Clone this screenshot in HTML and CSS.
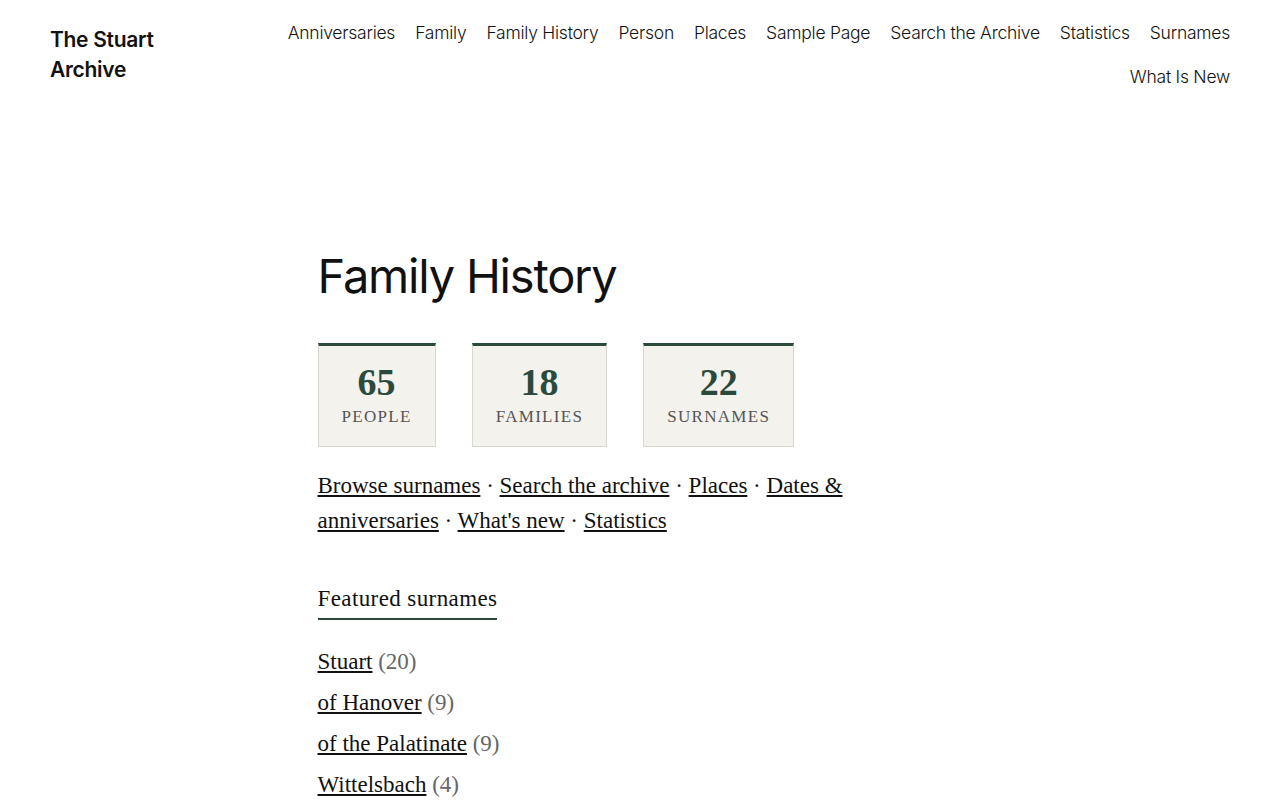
FILE: index.html
```html
<!DOCTYPE html>
<html lang="en">
  <head>
    <meta charset="UTF-8" />
    <meta name="viewport" content="width=device-width, initial-scale=1.0" />
    <title>Family History – The Stuart Archive</title>
    <link rel="stylesheet" href="styles.css">
  </head>
  <body>
    <header class="site-header">
      <a class="site-title" href="#">The Stuart Archive</a>
      <nav class="site-nav">
        <ul>
          <li><a href="#">Anniversaries</a></li>
          <li><a href="#">Family</a></li>
          <li><a href="#">Family History</a></li>
          <li><a href="#">Person</a></li>
          <li><a href="#">Places</a></li>
          <li><a href="#">Sample Page</a></li>
          <li><a href="#">Search the Archive</a></li>
          <li><a href="#">Statistics</a></li>
          <li><a href="#">Surnames</a></li>
          <li><a href="#">What Is New</a></li>
        </ul>
      </nav>
    </header>

    <main class="content">
      <h1 class="page-title">Family History</h1>

      <div class="stats">
        <div class="stat">
          <span class="stat-num">65</span>
          <span class="stat-label">People</span>
        </div>
        <div class="stat">
          <span class="stat-num">18</span>
          <span class="stat-label">Families</span>
        </div>
        <div class="stat">
          <span class="stat-num">22</span>
          <span class="stat-label">Surnames</span>
        </div>
      </div>

      <p class="quick-links">
        <a href="#">Browse surnames</a> · <a href="#">Search the archive</a> · <a href="#">Places</a> · <a href="#">Dates &amp; anniversaries</a> · <a href="#">What's new</a> · <a href="#">Statistics</a>
      </p>

      <h2 class="section-title">Featured surnames</h2>

      <ul class="surname-list">
        <li><a href="#">Stuart</a> <span class="count">(20)</span></li>
        <li><a href="#">of Hanover</a> <span class="count">(9)</span></li>
        <li><a href="#">of the Palatinate</a> <span class="count">(9)</span></li>
        <li><a href="#">Wittelsbach</a> <span class="count">(4)</span></li>
      </ul>
    </main>
  </body>
</html>
```

FILE: styles.css
```css
body {
  margin: 0;
  background: #fff;
  color: #111;
  font-family: "Liberation Serif", serif;
}

a {
  color: #111;
}

.site-header {
  display: flex;
  justify-content: space-between;
  align-items: flex-start;
  gap: 40px;
  padding: 11px 50px 0 50px;
}

.site-title {
  width: 120px;
  flex-shrink: 0;
  margin-top: 14px;
  font-family: "Inter", sans-serif;
  font-size: 21px;
  font-weight: 600;
  line-height: 30px;
  letter-spacing: -0.3px;
  text-decoration: none;
  color: #111;
}

.site-nav ul {
  display: flex;
  flex-wrap: wrap;
  justify-content: flex-end;
  column-gap: 20px;
  margin: 0;
  padding: 0;
  list-style: none;
}

.site-nav a {
  font-family: "Inter", sans-serif;
  font-size: 17.5px;
  font-weight: 300;
  line-height: 44px;
  letter-spacing: -0.25px;
  text-decoration: none;
  color: #111;
}

.content {
  width: 645px;
  margin: 0 auto;
  padding-top: 147px;
}

.page-title {
  margin: 0 0 37px 0;
  font-family: "Inter", sans-serif;
  font-size: 47px;
  font-weight: 400;
  letter-spacing: -1.2px;
  line-height: 60px;
}

.stats {
  display: flex;
  gap: 36px;
}

.stat {
  display: flex;
  flex-direction: column;
  align-items: center;
  padding: 14px 23px 19px 23px;
  background: #f3f2ed;
  border: 1px solid #d8d6cf;
  border-top: 3px solid #2b4a3b;
}

.stat-num {
  font-size: 38px;
  font-weight: bold;
  line-height: 44px;
  color: #2b4a3b;
}

.stat-label {
  margin-top: 3px;
  font-size: 17px;
  letter-spacing: 1.3px;
  text-transform: uppercase;
  color: #555;
}

.quick-links {
  margin: 21px 0 0 0;
  font-size: 23px;
  line-height: 35px;
}

.section-title {
  display: inline-block;
  margin: 46px 0 0 0;
  padding-bottom: 4px;
  font-size: 23px;
  font-weight: normal;
  line-height: 30px;
  letter-spacing: 0.4px;
  border-bottom: 2px solid #2b4a3b;
}

.surname-list {
  margin: 21px 0 0 0;
  padding: 0;
  list-style: none;
  font-size: 23px;
  line-height: 41px;
}

.count {
  color: #666;
}
```
